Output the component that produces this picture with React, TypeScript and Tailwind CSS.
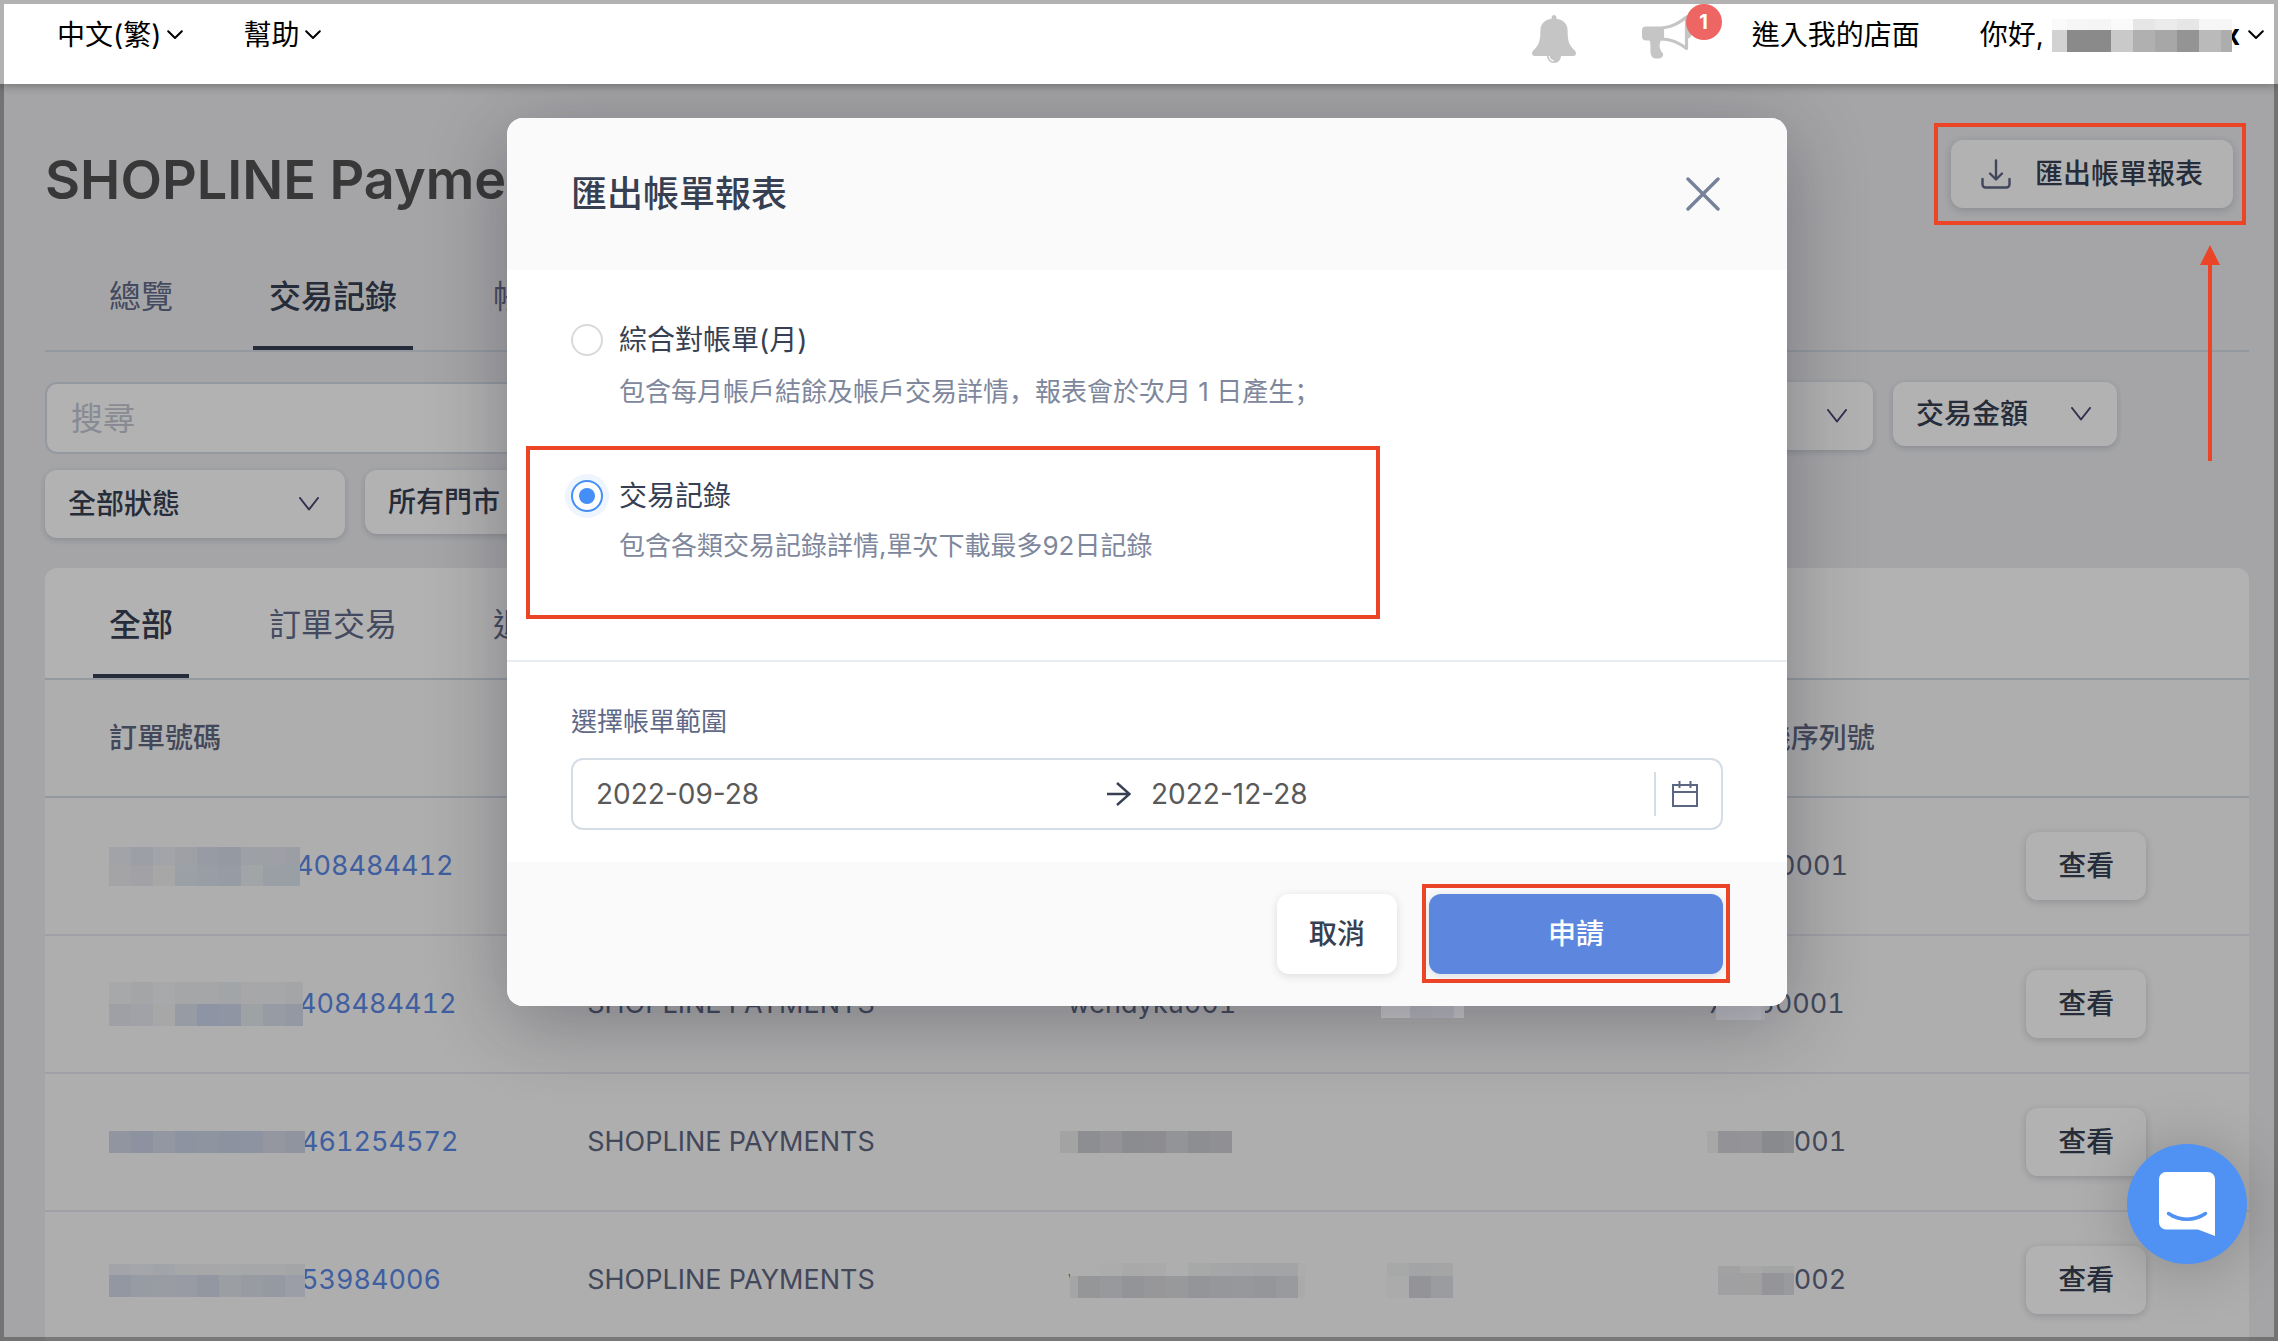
import { useState } from "react";
import clsx from "clsx";

type MosaicProps = {
  rows: string[][];
  heights: number[];
  // width of the first block, the rest are 22px wide
  lead?: number;
  width: number;
  className?: string;
};

type Order = {
  id: string;
  idMask: MosaicProps;
  channel: string;
  staff?: string;
  staffMask?: MosaicProps;
  storeMask?: MosaicProps;
  serialHead?: string;
  serialMask?: MosaicProps;
  serial: string;
};

const orders: Order[] = [
  {
    id: "408484412",
    idMask: {
      width: 191,
      heights: [18, 21],
      rows: [
        ["#e7eaf3", "#e0e4ed", "#e9ebf3", "#e2e6ee", "#dadeea", "#d4dbe9", "#e1e5ec", "#e2e6ee", "#dee4ec"],
        ["#ebebf0", "#e8e8ee", "#efefef", "#dfe4ee", "#dbe1ec", "#d7deeb", "#e8ecef", "#dde4ec", "#dce5ec"],
      ],
    },
    channel: "SHOPLINE PAYMENTS",
    staff: "wendyku001",
    serial: "A0050001",
  },
  {
    id: "408484412",
    idMask: {
      width: 194,
      heights: [22, 22],
      rows: [
        ["#f0f1f3", "#ebedf0", "#f1f2f4", "#eceef0", "#eceef0", "#e8ecef", "#eff0f2", "#eef0f2", "#ebecef"],
        ["#e2e5ee", "#e6e8f0", "#efefef", "#d9deeb", "#cbd5ea", "#cdd6ea", "#e3e8ec", "#d8dfea", "#d3dae8"],
      ],
    },
    channel: "SHOPLINE PAYMENTS",
    staff: "wendyku001",
    storeMask: {
      width: 83,
      heights: [28],
      lead: 29,
      rows: [["#c8c8ca", "#b7b8bc", "#b9babf", "#c8c8ca"]],
      className: "relative z-10",
    },
    serialHead: "7",
    serialMask: {
      width: 49,
      heights: [32],
      lead: 23,
      rows: [["#bcbdc2", "#bbbcc1", "#b4b5b8"]],
      className: "z-10",
    },
    serial: "50001",
  },
  {
    id: "461254572",
    idMask: {
      width: 196,
      heights: [22],
      rows: [["#cfd6e6", "#c9d2e5", "#d3d9e8", "#cbd3e5", "#cdd5e7", "#cad2e5", "#cbd3e6", "#d4d9e6", "#ced5e4"]],
    },
    channel: "SHOPLINE PAYMENTS",
    staffMask: {
      width: 172,
      heights: [22],
      lead: 18,
      rows: [["#eaeaea", "#cbccd2", "#d1d2d8", "#c8c9ce", "#cacbd0", "#d3d4da", "#cbccd2", "#cecfd5"]],
    },
    serialMask: {
      width: 87,
      heights: [22],
      lead: 11,
      rows: [["#f0f0f0", "#d1d2d8", "#d4d5da", "#c5c6cb", "#c9cace"]],
    },
    serial: "001",
  },
  {
    id: "53984006",
    idMask: {
      width: 196,
      heights: [11, 22],
      rows: [
        ["#e8ebf3", "#eceef2", "#e7ebf1", "#eef0f2", "#f0f0f2", "#f0f1f2", "#edeff1", "#eef0f1", "#eaedf0"],
        ["#d2d8e8", "#d9deea", "#dce0ea", "#dadeea", "#d2d8e8", "#dfe3ea", "#dbdfe9", "#d6dbe8", "#dfe3ee"],
      ],
    },
    channel: "SHOPLINE PAYMENTS",
    staff: "w",
    staffMask: {
      width: 235,
      lead: 8,
      heights: [13, 22],
      rows: [
        ["#fafafa", "#f9f9f9", "#f7f7f7", "#f2f2f2", "#f4f4f4", "#fafafa", "#f0f1f1", "#eceeef", "#ebedee", "#e9ebec", "#e9ebec", "#f7f7f7"],
        ["#ececec", "#d6d7da", "#dadbe0", "#d3d4d9", "#d8d9dd", "#dadbdf", "#d5d6db", "#d7d9df", "#d9dade", "#d5d7dd", "#dcdde2", "#f4f4f4"],
      ],
    },
    storeMask: {
      width: 66,
      heights: [13, 22],
      rows: [
        ["#f0f1f1", "#e9ebec", "#eceded"],
        ["#f5f5f5", "#d4d5da", "#dfe0e5"],
      ],
      className: "ml-1.5",
    },
    serialMask: {
      width: 87,
      lead: 11,
      heights: [7, 22],
      rows: [
        ["#fafafa", "#e8e9ea", "#f0f0f0", "#eaecec", "#eaecec"],
        ["#fafafa", "#e5e6e8", "#e6e6e6", "#d4d5dc", "#dcdde0"],
      ],
    },
    serial: "002",
  },
];

const userMask: MosaicProps = {
  width: 180,
  lead: 15,
  heights: [11, 22],
  rows: [
    ["#fafafa", "#f6f6f6", "#f5f5f5", "#fafafa", "#e6e6e6", "#ebebeb", "#e6e6e6", "#f6f6f6", "#f6f6f6"],
    ["#d2d2d2", "#8a8a8a", "#8a8a8a", "#c9c9c9", "#b0b0b0", "#a7a7a7", "#949494", "#bababa", "#adadad"],
  ],
};

const Mosaic = ({ rows, heights, lead = 22, width, className }: MosaicProps) => {
  const total = heights.reduce((a, b) => a + b, 0);
  return (
    <svg width={width} height={total} className={clsx("shrink-0", className)} shapeRendering="crispEdges" aria-hidden="true">
      {rows.map((row, r) => {
        const y = heights.slice(0, r).reduce((a, b) => a + b, 0);
        return row.map((color, c) => (
          <rect
            key={`${r}-${c}`}
            x={c === 0 ? 0 : lead + (c - 1) * 22}
            y={y}
            width={c === 0 ? lead : 22}
            height={heights[r]}
            fill={color}
          />
        ));
      })}
    </svg>
  );
};

const Caret = ({ className }: { className?: string }) => (
  <svg width="16" height="10" viewBox="0 0 16 10" fill="none" className={className} aria-hidden="true">
    <path d="M1.2 1.2 8 8l6.800-6.800" stroke="currentColor" strokeWidth="2" strokeLinecap="round" strokeLinejoin="round" />
  </svg>
);

const BellIcon = () => (
  <svg width="44" height="48" viewBox="0 0 44 48" aria-hidden="true">
    <path
      d="M22 0c1.400 0 2.400 1 2.400 2.300v1.500C31 4.600 35.600 9 35.600 15.500c0 9.500 1.200 15 7.200 20 2 1.900 1.300 5.500-1.300 5.500H2.500C-.1 41-.8 37.400 1.200 35.500c6-5 7.200-10.500 7.200-20C8.400 9 13 4.600 19.600 3.800V2.300C19.600 1 20.600 0 22 0Z"
      fill="#c5c5c5"
    />
    <path d="M15 40.500h14c0 4.500-3 7.500-7 7.500s-7-3-7-7.500Z" fill="#c5c5c5" />
    <path d="M17.300 41.500c.3 2.300 1.700 3.800 4 4.200" stroke="#fff" strokeWidth="1.200" fill="none" strokeLinecap="round" />
  </svg>
);

const MegaphoneIcon = () => (
  <svg width="50" height="44" viewBox="0 0 50 44" aria-hidden="true">
    <path d="M4 11.500h18v14H4a4 4 0 0 1-4-4v-6a4 4 0 0 1 4-4Z" fill="#c5c5c5" />
    <path d="M7 24h12.500c-2.500 5-3 9.500 1.500 14.500.8 3-1.500 5-6 5-4 0-5.500-1.500-6.200-4.500C7.800 34 9.500 29 7 24Z" fill="#c5c5c5" />
    <path d="M20.500 13C31 12 37.500 7.500 44.500 2v31.500C37.500 28 31 24.500 20.500 24Z" fill="#fff" stroke="#c5c5c5" strokeWidth="3.200" strokeLinejoin="round" />
    <path d="M46 11.500c2.700.6 4 3.200 4 6s-1.300 5.400-4 6Z" fill="#c5c5c5" />
  </svg>
);

const DownloadIcon = () => (
  <svg width="30" height="30" viewBox="0 0 30 30" fill="none" stroke="#5c6684" strokeWidth="2.400" strokeLinecap="round" strokeLinejoin="round" aria-hidden="true">
    <path d="M15 1.500V20M9 14.500l6 6 6-6" />
    <path d="M1.500 20v5.500a3 3 0 0 0 3 3h21a3 3 0 0 0 3-3V20" />
  </svg>
);

const Select = ({ label, className, options }: { label: string; className?: string; options: string[] }) => (
  <div className={clsx("relative", className)}>
    <select
      aria-label={label}
      className="h-full w-full appearance-none rounded-xl bg-white pl-[23px] pr-14 text-[28px] font-medium text-[#373f52] shadow-[0_2px_6px_rgba(30,40,60,0.18)]"
    >
      {options.map((o) => (
        <option key={o}>{o}</option>
      ))}
    </select>
    <svg width="20" height="14" viewBox="0 0 20 14" fill="none" className="pointer-events-none absolute right-[26px] top-1/2 -translate-y-1/2 text-[#4a4470]" aria-hidden="true">
      <path d="M1 1l9 11.500L19 1" stroke="currentColor" strokeWidth="2" strokeLinecap="round" strokeLinejoin="round" />
    </svg>
  </div>
);

const Header = () => (
  <header className="relative z-20 flex h-[84px] shrink-0 items-start justify-between bg-white pl-[57px] pr-3.5 pt-[15px] text-[28px] leading-10 text-black shadow-[0_1px_10px_rgba(0,0,0,0.35)]">
    <nav className="flex gap-[60px]">
      <button className="flex items-center gap-1.5">
        中文(繁)
        <Caret />
      </button>
      <button className="flex items-center gap-1.5">
        幫助
        <Caret />
      </button>
    </nav>
    <div className="flex items-start">
      <button className="mr-[66px]" aria-label="通知">
        <BellIcon />
      </button>
      <button className="relative mr-[60px] flex items-start" aria-label="公告">
        <MegaphoneIcon />
        <span className="absolute -right-[30px] -top-[11px] flex h-9 w-9 items-center justify-center rounded-full bg-[#ed6663] text-xl font-bold text-white">
          1
        </span>
      </button>
      <a href="#store" className="mr-[60px]">
        進入我的店面
      </a>
      <button className="flex h-10 items-center">
        你好,
        <Mosaic {...userMask} className="relative z-10 -mr-2 ml-2" />
        <span className="mr-2 font-bold">x</span>
        <Caret />
      </button>
    </div>
  </header>
);

const Tabs = ({ items, active, tall }: { items: string[]; active: string; tall?: boolean }) => (
  <nav className="flex gap-16 border-b-2 border-[#d4dce4] pl-12 text-[32px]">
    {items.map((item) => (
      <button
        key={item}
        className={clsx(
          "border-b-4 px-4",
          tall ? "h-[110px] pt-2" : "h-[102px]",
          item === active ? "border-[#373f52] font-medium text-[#373f52]" : "border-transparent text-[#626b88]"
        )}
      >
        {item}
      </button>
    ))}
  </nav>
);

const OrderTable = () => (
  <table className="w-full table-fixed border-separate border-spacing-0 bg-[#fafafa] text-left text-[27px] tabular-nums text-[#5f6781]">
    <colgroup>
      <col className="w-[24.6%]" />
      <col className="w-[21.8%]" />
      <col className="w-[14.2%]" />
      <col className="w-[14.8%]" />
      <col className="w-[14.5%]" />
      <col />
    </colgroup>
    <thead>
      <tr className="h-[118px] text-[28px]">
        <th className="border-b-2 border-[#d4dce4] pl-16 font-medium">訂單號碼</th>
        <th className="border-b-2 border-[#d4dce4] font-medium">付款方式</th>
        <th className="border-b-2 border-[#d4dce4] font-medium">員工</th>
        <th className="border-b-2 border-[#d4dce4] font-medium">門市</th>
        <th className="border-b-2 border-[#d4dce4] font-medium">終端機序列號</th>
        <th className="border-b-2 border-[#d4dce4]" aria-label="操作" />
      </tr>
    </thead>
    <tbody>
      {orders.map((order, i) => (
        <tr key={i} className="h-[138px]">
          <td className="border-b-2 border-[#e6e6ee] pl-16">
            <a href="#order" className="flex items-center text-[#5b88e6]">
              <Mosaic {...order.idMask} className="relative -mr-1" />
              {order.id}
            </a>
          </td>
          <td className="border-b-2 border-[#e6e6ee]">{order.channel}</td>
          <td className="border-b-2 border-[#e6e6ee]">
            <div className="flex items-center">
              {order.staff}
              {order.staffMask && <Mosaic {...order.staffMask} className={order.staff ? "relative -ml-5" : "-ml-2"} />}
            </div>
          </td>
          <td className="border-b-2 border-[#e6e6ee]">{order.storeMask && <Mosaic {...order.storeMask} />}</td>
          <td className="border-b-2 border-[#e6e6ee]">
            <div className="flex items-center">
              {order.serialHead}
              {order.serialMask && (
                <Mosaic
                  {...order.serialMask}
                  className={clsx(order.serialMask.className, order.serialHead && "relative -ml-2 -mr-2")}
                />
              )}
              {order.serial}
            </div>
          </td>
          <td className="border-b-2 border-[#e6e6ee]">
            <button className="h-[68px] w-[120px] rounded-xl bg-white text-[28px] font-medium text-[#373f52] shadow-[0_2px_8px_rgba(30,40,60,0.2)]">
              查看
            </button>
          </td>
        </tr>
      ))}
    </tbody>
  </table>
);

const PaymentsPage = () => (
  <div className="pb-1 pl-[45px] pr-[29px] pt-14">
    <div className="flex items-start justify-between pr-4">
      <h1 className="text-[54px] font-semibold leading-[80px] text-[#515151]">SHOPLINE Payments</h1>
      <div className="relative">
        <button className="flex h-[68px] items-center gap-6 rounded-xl bg-white px-[30px] text-[28px] font-medium text-[#373f52] shadow-[0_2px_8px_rgba(30,40,60,0.2)]">
          <DownloadIcon />
          匯出帳單報表
        </button>
        {/* callout frame and arrow pointing at the export button */}
        <div className="pointer-events-none absolute -bottom-[17px] -left-[17px] -right-[13px] -top-[17px] z-10 border-4 border-[#ec4427]" />
        <svg width="20" height="216" viewBox="0 0 20 216" fill="#ec4427" className="pointer-events-none absolute right-[13px] top-[105px] z-10" aria-hidden="true">
          <path d="M10 0 20 20h-8v196H8V20H0Z" />
        </svg>
      </div>
    </div>
    <div className="mt-7">
      <Tabs items={["總覽", "交易記錄", "帳單"]} active="交易記錄" />
    </div>

    <div className="mt-[30px] flex flex-col gap-4">
      <div className="mr-[132px] flex items-start gap-5">
        <input
          type="text"
          aria-label="搜尋"
          placeholder="搜尋"
          className="h-[72px] flex-1 rounded-xl border-2 border-[#d4dce4] bg-white px-6 text-[32px] placeholder:text-[#c4c7d3]"
        />
        <Select label="交易日期" options={["交易日期"]} className="h-[68px] w-[400px]" />
        <Select label="交易金額" options={["交易金額"]} className="h-16 w-56" />
      </div>
      <div className="flex items-start gap-5">
        <Select label="狀態" options={["全部狀態"]} className="h-[68px] w-[300px]" />
        <Select label="門市" options={["所有門市"]} className="h-16 w-[200px]" />
      </div>
    </div>

    <div className="mt-[30px] overflow-hidden rounded-t-xl bg-white">
      <Tabs items={["全部", "訂單交易", "退款交易"]} active="全部" tall />
      <OrderTable />
    </div>
  </div>
);

type ReportType = "monthly" | "records";

const radioStyle =
  "relative h-8 w-8 shrink-0 appearance-none rounded-full border-2 border-[#d9d9d9] bg-white checked:border-[#448ef7] checked:shadow-[0_0_0_6px_#eef5fe] checked:before:absolute checked:before:inset-1.5 checked:before:rounded-full checked:before:bg-[#448ef7]";

const ExportDialog = () => {
  const [report, setReport] = useState<ReportType>("records");

  return (
    <div
      role="dialog"
      aria-labelledby="export-title"
      className="w-full max-w-[1280px] self-start overflow-hidden rounded-2xl bg-white text-[#373f52] shadow-[0_16px_80px_rgba(25,25,45,0.32)]"
    >
      <div className="flex h-[152px] items-center justify-between bg-[#fafafa] px-16">
        <h2 id="export-title" className="text-[36px] font-medium">
          匯出帳單報表
        </h2>
        <button aria-label="關閉">
          <svg width="40" height="34" viewBox="0 0 40 34" fill="none" stroke="#76829a" strokeWidth="3.400" strokeLinecap="round" aria-hidden="true">
            <path d="M5 2l30 30M35 2 5 32" />
          </svg>
        </button>
      </div>

      <div className="border-b-2 border-[#e8edf2] px-16 pb-[94px] pt-[50px] leading-10">
        <div>
          <label className="flex items-center gap-4 text-[28px]">
            <input
              type="radio"
              name="report"
              checked={report === "monthly"}
              onChange={() => setReport("monthly")}
              className={radioStyle}
            />
            綜合對帳單(月)
          </label>
          <p className="ml-12 mt-2.5 text-[26px] text-[#7e879c]">
            包含每月帳戶結餘及帳戶交易詳情<span className="font-['Noto_Sans_CJK_SC']">，</span>報表會於次月 1 日產生
            <span className="font-['Noto_Sans_CJK_SC']">；</span>
          </p>
        </div>
        <div className="relative mt-16">
          <label className="flex items-center gap-4 text-[28px]">
            <input
              type="radio"
              name="report"
              checked={report === "records"}
              onChange={() => setReport("records")}
              className={radioStyle}
            />
            交易記錄
          </label>
          <p className="ml-12 mt-2.5 text-[26px] text-[#7e879c]">包含各類交易記錄詳情,單次下載最多92日記錄</p>
          <div className="pointer-events-none absolute -bottom-[53px] -left-[45px] -top-[30px] right-[343px] border-4 border-[#ec4427]" />
        </div>
      </div>

      <div className="px-16 pb-8 pt-10">
        <label htmlFor="start-date" className="block text-[26px] leading-10 text-[#5f6987]">
          選擇帳單範圍
        </label>
        <div className="mt-4 flex h-[72px] items-center rounded-xl border-2 border-[#d4dde6] px-[23px] text-[28px] text-[#595959]">
          <input id="start-date" type="text" defaultValue="2022-09-28" className="mr-2 min-w-0 flex-1" />
          <svg width="24" height="24" viewBox="0 0 24 24" fill="none" stroke="#373f52" strokeWidth="2.400" className="mr-5 shrink-0" aria-hidden="true">
            <path d="M0 12h22.500M10 1l12.500 11L10 23" />
          </svg>
          <input type="text" aria-label="結束日期" defaultValue="2022-12-28" className="min-w-0 flex-1" />
          <span className="mr-4 h-11 w-0.5 bg-[#d4dde6]" />
          <svg width="26" height="26" viewBox="0 0 26 26" fill="none" stroke="#5b6683" strokeWidth="2" className="shrink-0" aria-hidden="true">
            <path d="M1 4h24v21H1ZM1 11h24M7.500 0v7M18.500 0v7" />
          </svg>
        </div>
      </div>

      <div className="flex justify-end gap-8 bg-[#fafafa] px-16 py-8 text-[28px] font-medium">
        <button className="h-20 w-[120px] rounded-xl bg-white shadow-[0_2px_8px_rgba(30,40,60,0.14)]">取消</button>
        <div className="relative">
          <button className="h-20 w-[294px] rounded-xl bg-[#5d87de] text-white shadow-[0_2px_8px_rgba(30,40,60,0.14)]">
            申請
          </button>
          <div className="pointer-events-none absolute -bottom-[9px] -left-[7px] -right-[7px] -top-[10px] border-4 border-[#ec4427]" />
        </div>
      </div>
    </div>
  );
};

const ChatButton = () => (
  <button
    aria-label="聊天"
    className="absolute bottom-[77px] right-[31px] z-20 flex h-[120px] w-[120px] items-center justify-center rounded-full bg-[#5092f4] shadow-[0_4px_60px_rgba(0,0,0,0.22)]"
  >
    <svg width="56" height="64" viewBox="0 0 56 64" aria-hidden="true">
      <path d="M7 0h42a7 7 0 0 1 7 7v57l-17-6.500H7a7 7 0 0 1-7-7V7a7 7 0 0 1 7-7Z" fill="#fff" />
      <path d="M9.500 41.500c11 7.600 26 7.600 37 0" stroke="#5092f4" strokeWidth="3.500" fill="none" strokeLinecap="round" />
    </svg>
  </button>
);

const App = () => {
  return (
    <div className="relative flex h-screen flex-col overflow-hidden bg-[#ecedf0] font-['Inter','Noto_Sans_CJK_TC',sans-serif]">
      <Header />
      <main className="relative min-h-0 flex-1 overflow-hidden">
        <PaymentsPage />
        <div className="absolute inset-0 bg-black/30" />
        <div className="absolute inset-0 z-20 flex justify-center pl-4 pt-[34px]">
          <ExportDialog />
        </div>
      </main>
      <ChatButton />
      <div className="pointer-events-none absolute inset-0 z-30 border-4 border-black/30" />
    </div>
  );
};

export default App;
